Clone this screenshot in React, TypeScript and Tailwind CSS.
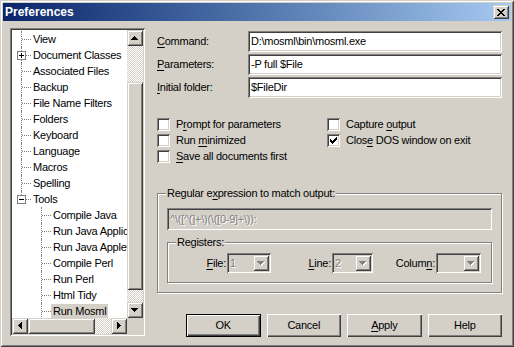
import React from "react";

const sunken =
  "shadow-[inset_1px_1px_0_#808080,inset_-1px_-1px_0_#ffffff,inset_2px_2px_0_#404040,inset_-2px_-2px_0_#d4d0c8]";
const raised =
  "shadow-[inset_1px_1px_0_#d4d0c8,inset_-1px_-1px_0_#404040,inset_2px_2px_0_#ffffff,inset_-2px_-2px_0_#808080]";
const pushed =
  "shadow-[inset_1px_1px_0_#ffffff,inset_-1px_-1px_0_#404040,inset_-2px_-2px_0_#808080]";
const checker =
  "bg-[repeating-conic-gradient(#ffffff_0%_25%,#d4d0c8_0%_50%)] bg-size-[2px_2px] bg-[length:2px_2px]";
const disabledText = "text-[#808080] [text-shadow:1px_1px_0_#ffffff]";

type Dir = "up" | "down" | "left" | "right";

function Arrow({ dir, disabled }: { dir: Dir; disabled?: boolean }) {
  const shapes: Record<Dir, { w: number; h: number; pts: string }> = {
    up: { w: 7, h: 4, pts: "3.5,0 7,4 0,4" },
    down: { w: 7, h: 4, pts: "0,0 7,0 3.5,4" },
    left: { w: 4, h: 7, pts: "4,0 4,7 0,3.5" },
    right: { w: 4, h: 7, pts: "0,0 4,3.5 0,7" },
  };
  const s = shapes[dir];
  return (
    <svg width={s.w + 1} height={s.h + 1} viewBox={`0 0 ${s.w + 1} ${s.h + 1}`} shapeRendering="crispEdges">
      {disabled && <polygon points={s.pts} fill="#ffffff" transform="translate(1,1)" />}
      <polygon points={s.pts} fill={disabled ? "#808080" : "#000000"} />
    </svg>
  );
}

function SbButton({ dir }: { dir: Dir }) {
  return (
    <div className={`w-4 h-4 shrink-0 bg-[#d4d0c8] ${raised} flex items-center justify-center`}>
      <Arrow dir={dir} />
    </div>
  );
}

function TreeRow({
  label,
  level,
  expander,
  lastRoot,
  selected,
}: {
  label: string;
  level: number;
  expander?: "plus" | "minus";
  lastRoot?: boolean;
  selected?: boolean;
}) {
  return (
    <div className="relative h-4 flex items-center whitespace-nowrap">
      {level === 0 && (
        <span
          className={`absolute left-[9px] top-0 w-0 border-l border-dotted border-[#808080] ${
            lastRoot ? "h-[8px]" : "h-4"
          }`}
        />
      )}
      {level === 1 && (
        <span className="absolute left-[29px] top-0 w-0 h-4 border-l border-dotted border-[#808080]" />
      )}
      <span
        className={`absolute top-[8px] w-[9px] border-t border-dotted border-[#808080] ${
          level === 0 ? "left-[10px]" : "left-[30px]"
        }`}
      />
      {expander && (
        <span className="absolute left-[5px] top-[4px] w-[9px] h-[9px] border border-[#808080] bg-white flex items-center justify-center">
          <span className="relative w-[5px] h-px bg-black" />
          {expander === "plus" && <span className="absolute w-px h-[5px] bg-black" />}
        </span>
      )}
      <span
        className={`${level === 0 ? "ml-[19px]" : "ml-[39px]"} px-[2px] h-[14px] leading-[14px] ${
          selected ? "bg-[#d4d0c8]" : ""
        }`}
      >
        {label}
      </span>
    </div>
  );
}

const rootItems = [
  "View",
  "Document Classes",
  "Associated Files",
  "Backup",
  "File Name Filters",
  "Folders",
  "Keyboard",
  "Language",
  "Macros",
  "Spelling",
];
const toolItems = [
  "Compile Java",
  "Run Java Application",
  "Run Java Applet",
  "Compile Perl",
  "Run Perl",
  "Html Tidy",
  "Run Mosml",
];

function Tree() {
  return (
    <div className={`w-[135px] h-[308px] shrink-0 p-[2px] bg-white ${sunken}`}>
      <div className="grid grid-cols-[1fr_16px] grid-rows-[1fr_16px] h-full">
        <div className="overflow-hidden pt-px bg-white">
          {rootItems.map((item) => (
            <TreeRow
              key={item}
              label={item}
              level={0}
              expander={item === "Document Classes" ? "plus" : undefined}
            />
          ))}
          <TreeRow label="Tools" level={0} expander="minus" lastRoot />
          {toolItems.map((item) => (
            <TreeRow key={item} label={item} level={1} selected={item === "Run Mosml"} />
          ))}
        </div>
        <div className="flex flex-col">
          <SbButton dir="up" />
          <div className={`h-[36px] ${checker}`} />
          <div className={`h-[208px] bg-[#d4d0c8] ${raised}`} />
          <div className={`flex-1 ${checker}`} />
          <SbButton dir="down" />
        </div>
        <div className="flex">
          <SbButton dir="left" />
          <div className={`w-[67px] bg-[#d4d0c8] ${raised}`} />
          <div className={`flex-1 ${checker}`} />
          <SbButton dir="right" />
        </div>
        <div className="bg-[#d4d0c8]" />
      </div>
    </div>
  );
}

function U({ children }: { children: React.ReactNode }) {
  return <span className="underline underline-offset-[2px]">{children}</span>;
}

function Field({ label, value }: { label: React.ReactNode; value: string }) {
  return (
    <div className="flex items-center h-[21px]">
      <div className="w-[91px]">{label}</div>
      <div className={`flex-1 h-full bg-white ${sunken} flex items-center pl-[3px]`}>{value}</div>
    </div>
  );
}

function Check({ label, checked }: { label: React.ReactNode; checked?: boolean }) {
  return (
    <div className="flex items-center h-4">
      <div className={`w-[13px] h-[13px] bg-white ${sunken} flex items-center justify-center`}>
        {checked && (
          <svg width="7" height="7" viewBox="0 0 7 7" shapeRendering="crispEdges">
            <path d="M0 2h1v1h1v1h1v-1h1v-1h1v-1h1v-1h1v3h-1v1h-1v1h-1v1h-1v1h-1v-1h-1v-1h-1v-1h-1z" fill="#000" />
          </svg>
        )}
      </div>
      <span className="ml-[6px]">{label}</span>
    </div>
  );
}

function Combo({ value, w }: { value: string; w: string }) {
  return (
    <div className={`${w} h-[20px] bg-[#d4d0c8] ${sunken} p-[2px] flex items-center`}>
      <span className={`flex-1 pl-[1px] ${disabledText}`}>{value}</span>
      <div className={`w-[16px] h-full ${raised} flex items-center justify-center`}>
        <Arrow dir="down" disabled />
      </div>
    </div>
  );
}

function Button({ children, primary }: { children: React.ReactNode; primary?: boolean }) {
  return (
    <div
      className={`w-[75px] h-[23px] bg-[#d4d0c8] flex items-center justify-center ${
        primary ? "border border-black" : ""
      }`}
    >
      <div className={`w-full h-full flex items-center justify-center ${pushed}`}>{children}</div>
    </div>
  );
}

export default function App() {
  return (
    <div
      className={`w-[514px] h-[347px] bg-[#d4d0c8] p-[3px] flex flex-col text-[11px] leading-[13px] tracking-[-0.25px] text-black font-['Liberation_Sans',Arial,sans-serif] shadow-[inset_1px_1px_0_#d4d0c8,inset_-1px_-1px_0_#404040,inset_2px_2px_0_#ffffff,inset_-2px_-2px_0_#808080]`}
    >
      {/* title bar */}
      <div className="h-[18px] shrink-0 flex items-center justify-between pl-[2px] pr-[2px] bg-gradient-to-r from-[#0a246a] to-[#a6caf0]">
        <span className="text-white font-bold text-[12px] tracking-normal">Preferences</span>
        <div className={`w-4 h-[14px] bg-[#d4d0c8] ${raised} flex items-center justify-center`}>
          <svg width="8" height="7" viewBox="0 0 8 7" shapeRendering="crispEdges">
            <path
              d="M0 0h2v1h1v1h2v-1h1v-1h2v1h-1v1h-1v1h-1v1h1v1h1v1h1v1h-2v-1h-1v-1h-2v1h-1v1h-2v-1h1v-1h1v-1h1v-1h-1v-1h-1v-1h-1z"
              fill="#000"
            />
          </svg>
        </div>
      </div>

      <div className="flex flex-1 pl-[7px] pt-[7px]">
        <Tree />

        <div className="ml-[12px] mt-[3px] w-[345px] flex flex-col">
          <div className="flex flex-col gap-[2px]">
            <Field label={<><U>C</U>ommand:</>} value={"D:\\mosml\\bin\\mosml.exe"} />
            <Field label={<><U>P</U>arameters:</>} value="-P full $File" />
            <Field label={<><U>I</U>nitial folder:</>} value="$FileDir" />
          </div>

          <div className="mt-[18px] grid grid-cols-[170px_1fr]">
            <Check label={<>P<U>r</U>ompt for parameters</>} />
            <Check label={<>Capture <U>o</U>utput</>} />
            <Check label={<>Run <U>m</U>inimized</>} />
            <Check label={<>Clos<U>e</U> DOS window on exit</>} checked />
            <Check label={<><U>S</U>ave all documents first</>} />
          </div>

          <div className="relative mt-[29px] h-[100px] border border-[#808080] shadow-[inset_1px_1px_0_#ffffff,1px_1px_0_#ffffff] px-[9px] pt-[14px]">
            <span className="absolute left-[8px] top-[-7px] px-px bg-[#d4d0c8]">
              Regular e<U>x</U>pression to match output:
            </span>
            <div className={`h-[22px] ${sunken} flex items-center pl-[3px] ${disabledText}`}>
              {"^\\([^(]+\\)(\\([0-9]+\\)):"}
            </div>

            <div className="relative mt-[12px] h-[41px] border border-[#808080] shadow-[inset_1px_1px_0_#ffffff,1px_1px_0_#ffffff] pt-[10px] flex items-start">
              <span className="absolute left-[8px] top-[-7px] px-px bg-[#d4d0c8]">Registers:</span>
              <div className="w-[59px] h-[20px] flex items-center justify-end pr-px">
                <U>F</U>ile:
              </div>
              <Combo value="1" w="w-[44px]" />
              <div className="w-[61px] h-[20px] flex items-center justify-end pr-px">
                <U>L</U>ine:
              </div>
              <Combo value="2" w="w-[41px]" />
              <div className="w-[63px] h-[20px] flex items-center justify-end pr-px">
                Colum<U>n</U>:
              </div>
              <Combo value="" w="w-[45px]" />
            </div>
          </div>

          <div className="mt-[21px] pl-[29px] flex gap-[6px]">
            <Button primary>OK</Button>
            <Button>Cancel</Button>
            <Button>
              <U>A</U>pply
            </Button>
            <Button>Help</Button>
          </div>
        </div>
      </div>
    </div>
  );
}
